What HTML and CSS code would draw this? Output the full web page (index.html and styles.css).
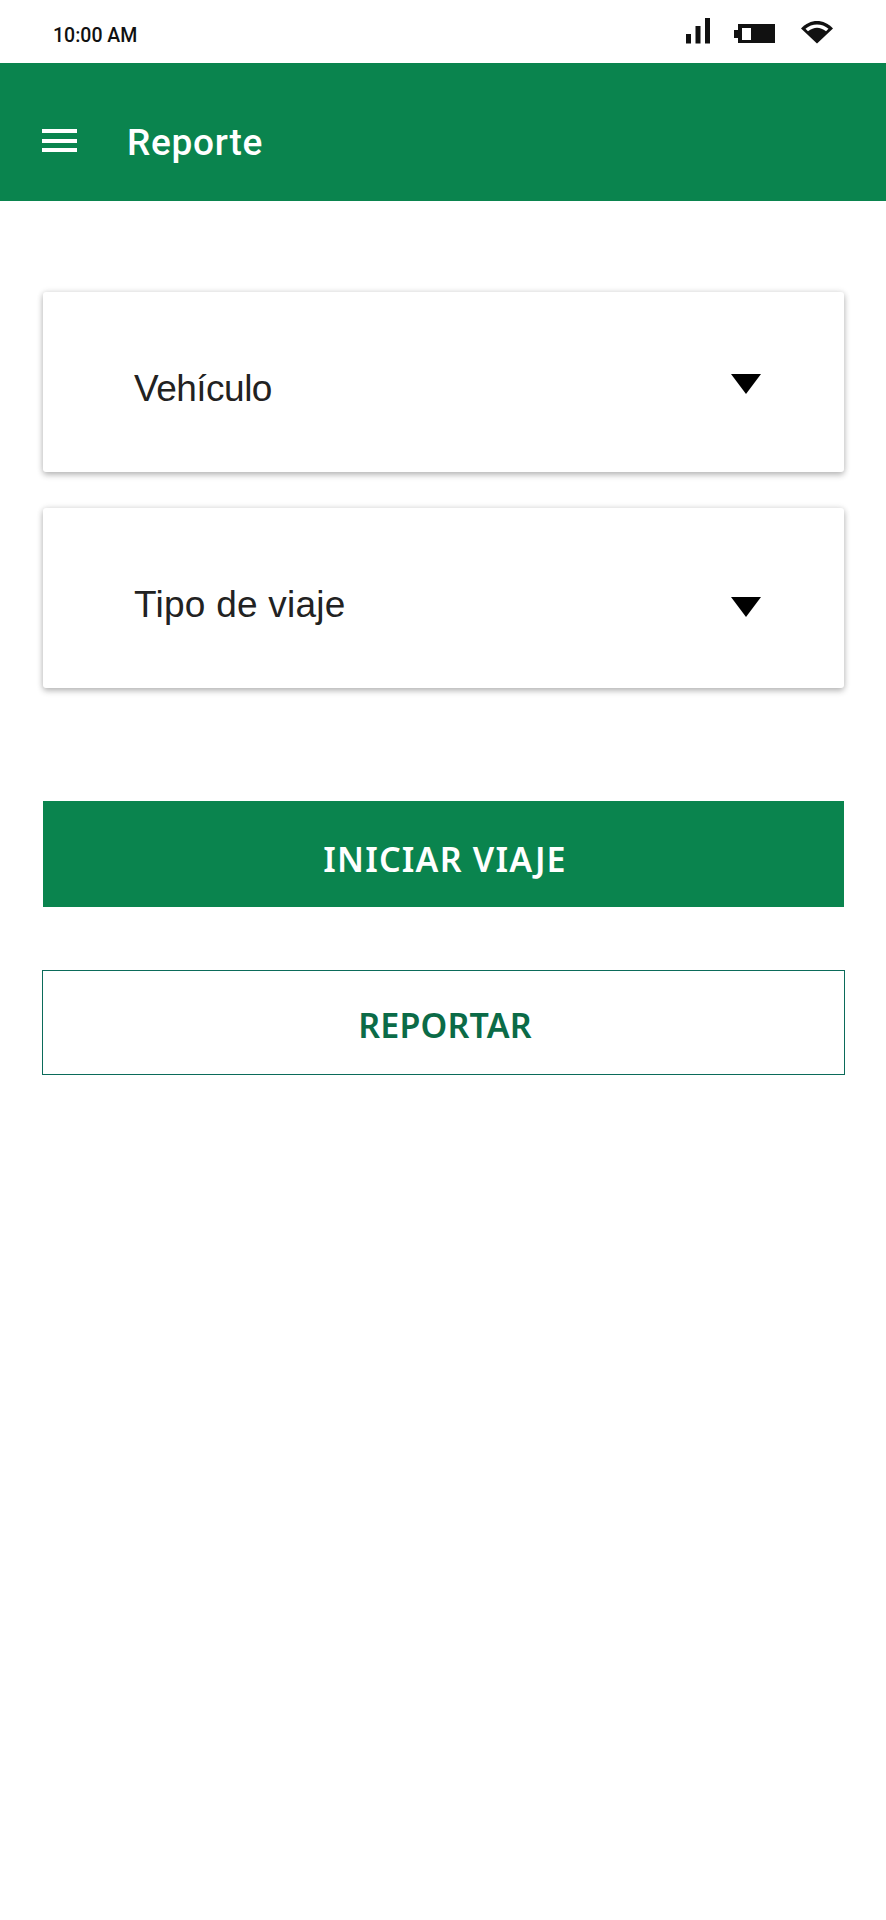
FILE: index.html
```html
<!DOCTYPE html>
<html lang="es">
<head>
    <meta charset="UTF-8">
    <meta name="viewport" content="width=device-width, initial-scale=1.0">
    <title>Reporte</title>
    <link rel="stylesheet" href="styles.css">
</head>
<body>

<div class="status-bar">
    <span class="status-time">10:00 AM</span>
    <svg class="status-icons" width="148" height="26" viewBox="0 0 148 26">
        <!-- señal -->
        <rect x="1" y="16" width="5" height="9.5"/>
        <rect x="10.500" y="8" width="5" height="17.5"/>
        <rect x="20" y="0" width="5" height="25.5"/>
        <!-- bateria -->
        <path d="M49 12h4V6h37v19H53v-5h-4z"/>
        <rect x="57" y="10" width="9" height="12" fill="#fff"/>
        <!-- wifi -->
        <path d="M116 10.500C125 .5 139 .5 148 10.500L132 25.500Z"/>
        <path d="M120.500 10.800C127 5 137 5 143.500 10.800L141 13.200C135 8.500 129 8.500 123 13.200Z" fill="#fff"/>
    </svg>
</div>

<header class="app-bar">
    <div class="menu-icon">
        <span></span>
        <span></span>
        <span></span>
    </div>
    <h1>Reporte</h1>
</header>

<main class="content">
    <div class="select-card">
        <span class="select-label">Vehículo</span>
        <span class="select-arrow"></span>
    </div>
    <div class="select-card select-card-second">
        <span class="select-label">Tipo de viaje</span>
        <span class="select-arrow"></span>
    </div>

    <button class="btn btn-primary" type="button">INICIAR VIAJE</button>
    <button class="btn btn-outline" type="button">REPORTAR</button>
</main>

</body>
</html>
```

FILE: styles.css
```css
* {
    box-sizing: border-box;
}
body {
    margin: 0;
    background-color: #fff;
    font-family: "Noto Sans", Arial, sans-serif;
}
.status-bar {
    height: 63px;
    padding: 0 53px 0 53px;
    display: flex;
    align-items: center;
    justify-content: space-between;
}
.status-time {
    font-family: Roboto, sans-serif;
    font-size: 19.5px;
    font-weight: 500;
    color: #111;
    position: relative;
    top: 4px;
}
.status-icons {
    fill: #111;
    position: relative;
    top: -1px;
}
.app-bar {
    height: 138px;
    padding-left: 42px;
    padding-top: 20px;
    background-color: #0a844e;
    display: flex;
    align-items: center;
    color: #fff;
}
.menu-icon {
    width: 35px;
    margin-right: 50px;
    margin-top: -3px;
    display: flex;
    flex-direction: column;
    gap: 5.300px;
}
.menu-icon span {
    display: block;
    height: 4px;
    background-color: #fff;
}
.app-bar h1 {
    margin: 0;
    font-family: Roboto, sans-serif;
    font-size: 37px;
    font-weight: 500;
    letter-spacing: 0.7px;
}
.content {
    padding: 91px 42px 0 43px;
}
.select-card {
    height: 180px;
    padding: 0 83px 0 91px;
    background-color: #fff;
    border-radius: 3px;
    box-shadow: 0 3px 6px rgba(0, 0, 0, 0.24), 0 0 6px rgba(0, 0, 0, 0.12);
    display: flex;
    align-items: center;
    justify-content: space-between;
}
.select-card-second {
    margin-top: 36px;
}
.select-label {
    font-family: "Liberation Sans", Arial, sans-serif;
    font-size: 37px;
    letter-spacing: -0.5px;
    color: #222;
    margin-top: 14px;
}
.select-card-second .select-label {
    letter-spacing: 0.25px;
}
.select-arrow {
    width: 0;
    height: 0;
    border-left: 15.500px solid transparent;
    border-right: 15.500px solid transparent;
    border-top: 20px solid #000;
    margin-top: 4px;
}
.select-card-second .select-arrow {
    margin-top: 18px;
}
.btn {
    display: block;
    font-family: "Noto Sans", Arial, sans-serif;
    font-size: 34px;
    border-radius: 0;
}
.btn-primary {
    width: 100%;
    height: 106px;
    margin-top: 113px;
    padding: 10px 0 0 3px;
    background-color: #0a844e;
    color: #fff;
    border: none;
    font-weight: 600;
    letter-spacing: 1.2px;
}
.btn-outline {
    width: calc(100% + 2px);
    height: 105px;
    margin: 63px 0 0 -1px;
    padding: 5px 0 0 3px;
    background-color: #fff;
    color: #0b6b47;
    border: 1px solid #0b6b5a;
    font-weight: 600;
    letter-spacing: 0.2px;
}
```
